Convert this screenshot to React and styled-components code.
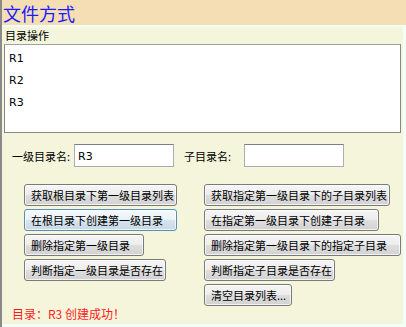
import React from "react";
import styled, { createGlobalStyle } from "styled-components";

const GlobalStyle = createGlobalStyle`
  html, body {
    margin: 0;
    padding: 0;
    background: #f0fff8;
  }
`;

const Window = styled.div`
  width: 404px;
  height: 327px;
  border-left: 2px solid #8a8a8a;
  background: #f0fff8;
  font-family: "Liberation Sans", "Noto Sans CJK SC", sans-serif;
  font-size: 11px;
  color: #000;
  overflow: hidden;
`;

const Header = styled.div`
  height: 25px;
  background: #f5deb3;
  color: #1a1aff;
  font-size: 18px;
  line-height: 27px;
  padding-left: 1px;
  font-family: "Noto Sans CJK SC", sans-serif;
`;

const Panel = styled.div`
  margin-top: 2px;
  width: 401px;
  height: 297px;
  background: #f5f5dc;
  display: flex;
  flex-direction: column;

  & > * {
    flex-shrink: 0;
  }
`;

const GroupLabel = styled.div`
  height: 17px;
  line-height: 17px;
  padding-left: 3px;
  font-family: "Noto Sans CJK SC", sans-serif;
`;

const ListBox = styled.div`
  margin-left: 2px;
  width: 395px;
  height: 84px;
  background: #fff;
  border: 1px solid #828790;
  border-top-color: #9aa3ab;
  padding-top: 3px;
  box-sizing: content-box;
`;

const ListItem = styled.div`
  height: 22px;
  line-height: 22px;
  padding-left: 4px;
  font-family: "DejaVu Sans", sans-serif;
  font-size: 11px;
`;

const FieldRow = styled.div`
  display: flex;
  align-items: center;
  margin-top: 11px;
  padding-left: 10px;
  height: 23px;
`;

const FieldLabel = styled.span`
  width: ${(p) => p.$w}px;
  font-family: "Noto Sans CJK SC", sans-serif;
`;

const TextBox = styled.div`
  width: 95px;
  height: 21px;
  background: #fff;
  border: 1px solid #abadb3;
  border-top-color: #7a7f87;
  margin-right: ${(p) => p.$mr || 0}px;
  padding-left: 3px;
  line-height: 23px;
  font-family: "DejaVu Sans", sans-serif;
  font-size: 11px;
  box-sizing: content-box;
`;

const ButtonGrid = styled.div`
  display: grid;
  grid-template-columns: 180px 200px;
  grid-auto-rows: 22px;
  row-gap: 3px;
  margin-top: 17px;
  padding-left: 22px;
  align-items: start;
`;

const Button = styled.div`
  width: ${(p) => p.$w}px;
  height: 22px;
  box-sizing: border-box;
  border: 1px solid ${(p) => (p.$focus ? "#5a8fb4" : "#7a7a7a")};
  border-radius: 3px;
  background: ${(p) =>
    p.$focus
      ? "linear-gradient(#f4f9fc 0%, #e9f2f8 48%, #d6e4ef 52%, #c8d8e6 100%)"
      : "linear-gradient(#f6f6f6 0%, #ececec 48%, #dedede 52%, #d2d2d2 100%)"};
  box-shadow: inset 0 0 0 1px rgba(255, 255, 255, 0.7);
  padding-left: 6px;
  line-height: 20px;
  white-space: nowrap;
  font-family: "Noto Sans CJK SC", sans-serif;
  font-size: 11px;
`;

const Empty = styled.div``;

const Status = styled.div`
  height: 16px;
  line-height: 16px;
  padding-left: 10px;
  color: #ff1a1a;
  font-size: 12px;
  font-family: "Noto Sans CJK SC", sans-serif;
`;

const buttons = [
  ["获取根目录下第一级目录列表", 153],
  ["获取指定第一级目录下的子目录列表", 186],
  ["在根目录下创建第一级目录", 153, true],
  ["在指定第一级目录下创建子目录", 175],
  ["删除指定第一级目录", 120],
  ["删除指定第一级目录下的指定子目录", 197],
  ["判断指定一级目录是否存在", 142],
  ["判断指定子目录是否存在", 131],
  null,
  ["清空目录列表...", 88],
];

export default function App() {
  return (
    <Window>
      <GlobalStyle />
      <Header>文件方式</Header>
      <Panel>
        <GroupLabel>目录操作</GroupLabel>
        <ListBox>
          <ListItem>R1</ListItem>
          <ListItem>R2</ListItem>
          <ListItem>R3</ListItem>
        </ListBox>
        <FieldRow>
          <FieldLabel $w={62}>一级目录名:</FieldLabel>
          <TextBox $mr={10}>R3</TextBox>
          <FieldLabel $w={60}>子目录名:</FieldLabel>
          <TextBox />
        </FieldRow>
        <ButtonGrid>
          {buttons.map((b, i) =>
            b ? (
              <Button key={i} $w={b[1]} $focus={b[2]}>
                {b[0]}
              </Button>
            ) : (
              <Empty key={i} />
            )
          )}
        </ButtonGrid>
        <Status>目录：R3 创建成功！</Status>
      </Panel>
    </Window>
  );
}
